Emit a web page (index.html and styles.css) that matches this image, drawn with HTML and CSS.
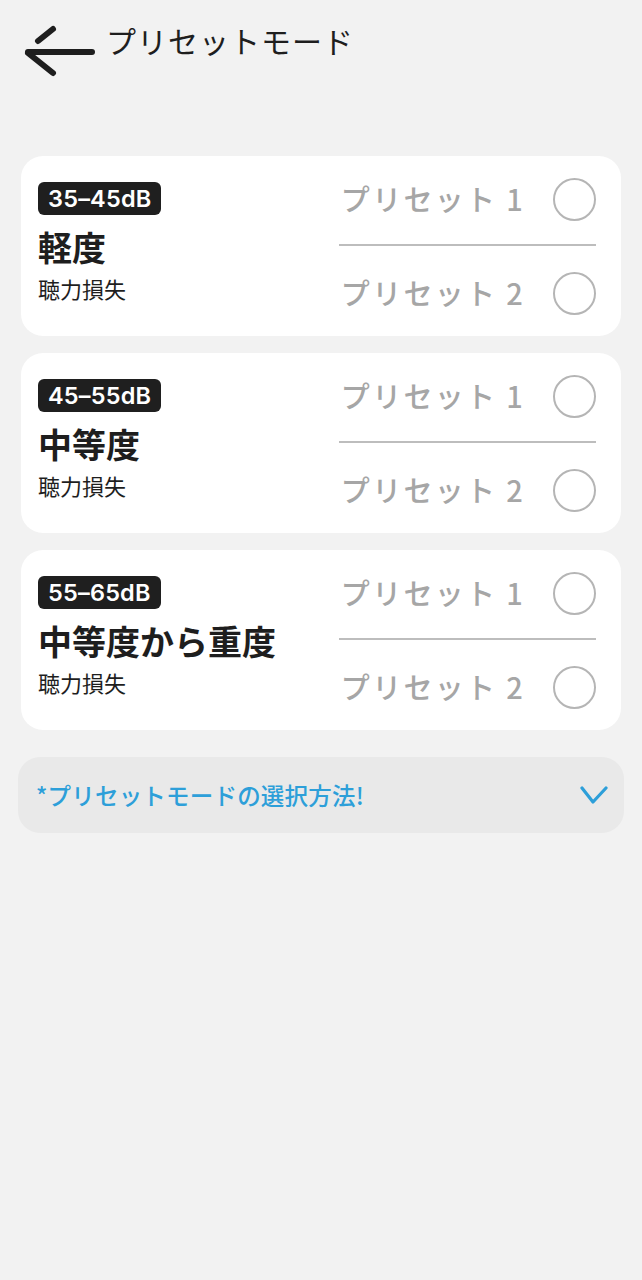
FILE: index.html
```html
<!DOCTYPE html>
<html lang="ja">
<head>
<meta charset="utf-8">
<title>プリセットモード</title>
<link rel="stylesheet" href="styles.css">
</head>
<body>
<header class="header">
  <svg class="back" width="72" height="56" viewBox="0 0 72 56">
    <g fill="none" stroke="#1e1e1e" stroke-width="6" stroke-linecap="round">
      <line x1="4" y1="28" x2="68" y2="28"/>
      <line x1="4" y1="29" x2="29" y2="49"/>
      <line x1="14" y1="17" x2="29" y2="5"/>
    </g>
  </svg>
  <h1 class="title">プリセットモード</h1>
</header>

<main class="list">
  <section class="card">
    <div class="info">
      <span class="badge">35–45dB</span>
      <div class="level">軽度</div>
      <div class="sub">聴力損失</div>
    </div>
    <div class="presets">
      <div class="row"><span class="label">プリセット 1</span><span class="radio"></span></div>
      <div class="divider"></div>
      <div class="row"><span class="label">プリセット 2</span><span class="radio"></span></div>
    </div>
  </section>

  <section class="card">
    <div class="info">
      <span class="badge">45–55dB</span>
      <div class="level">中等度</div>
      <div class="sub">聴力損失</div>
    </div>
    <div class="presets">
      <div class="row"><span class="label">プリセット 1</span><span class="radio"></span></div>
      <div class="divider"></div>
      <div class="row"><span class="label">プリセット 2</span><span class="radio"></span></div>
    </div>
  </section>

  <section class="card">
    <div class="info">
      <span class="badge">55–65dB</span>
      <div class="level">中等度から重度</div>
      <div class="sub">聴力損失</div>
    </div>
    <div class="presets">
      <div class="row"><span class="label">プリセット 1</span><span class="radio"></span></div>
      <div class="divider"></div>
      <div class="row"><span class="label">プリセット 2</span><span class="radio"></span></div>
    </div>
  </section>

  <div class="help">
    <span class="help-text">*プリセットモードの選択方法!</span>
    <svg class="chevron" width="28" height="20" viewBox="0 0 28 20">
      <polyline points="2,3 13,17 26,3" fill="none" stroke="#2d9fd9" stroke-width="3.2" stroke-linecap="round" stroke-linejoin="round"/>
    </svg>
  </div>
</main>
</body>
</html>
```

FILE: styles.css
```css
* { box-sizing: border-box; }

body {
  margin: 0;
  background: #f2f2f2;
  font-family: "Noto Sans CJK JP", "Noto Sans", sans-serif;
  color: #1e1e1e;
}

.header {
  display: flex;
  align-items: flex-start;
  padding: 24px 0 0 24px;
  height: 156px;
}

.back {
  flex: none;
  display: block;
}

.title {
  margin: -2px 0 0 10px;
  font-size: 30px;
  font-weight: 400;
  line-height: 36px;
  letter-spacing: 1px;
  color: #1e1e1e;
}

.list {
  padding: 0 21px;
  display: flex;
  flex-direction: column;
  gap: 17px;
}

.card {
  background: #fff;
  border-radius: 22px;
  height: 180px;
  padding: 20px 25px 20px 17px;
  display: flex;
  justify-content: space-between;
}

.info {
  display: flex;
  flex-direction: column;
  align-items: flex-start;
  padding-top: 6px;
}

.badge {
  background: #1f1f1f;
  color: #fff;
  border-radius: 6px;
  height: 33px;
  line-height: 33px;
  padding: 0 10px;
  font-family: "Inter", "Noto Sans", sans-serif;
  font-weight: 600;
  font-size: 23.5px;
  letter-spacing: 0.2px;
}

.level {
  margin-top: 12px;
  font-size: 34px;
  line-height: 40px;
  font-weight: 700;
}

.sub {
  margin-top: 7px;
  font-size: 22px;
  line-height: 28px;
  font-weight: 400;
}

.presets {
  width: 257px;
  display: flex;
  flex-direction: column;
}

.row {
  height: 46px;
  display: flex;
  align-items: center;
  justify-content: flex-end;
  gap: 28px;
}

.label {
  font-size: 29px;
  font-weight: 500;
  color: #a6a6a6;
  letter-spacing: 2.3px;
  white-space: nowrap;
  margin-top: -2px;
}

.radio {
  flex: none;
  width: 43px;
  height: 43px;
  border: 2.5px solid #b5b5b5;
  border-radius: 50%;
}

.divider {
  height: 2px;
  background: #bdbdbd;
  margin: 22px 0 24px;
}

.help {
  margin: 10px -3px 0;
  height: 76px;
  border-radius: 22px;
  background: #e9e9e9;
  display: flex;
  align-items: center;
  justify-content: space-between;
  padding: 0 16px 0 18px;
}

.help-text {
  color: #2d9fd9;
  font-size: 23.5px;
  font-weight: 500;
  letter-spacing: 0.2px;
}

.chevron {
  display: block;
}
```
